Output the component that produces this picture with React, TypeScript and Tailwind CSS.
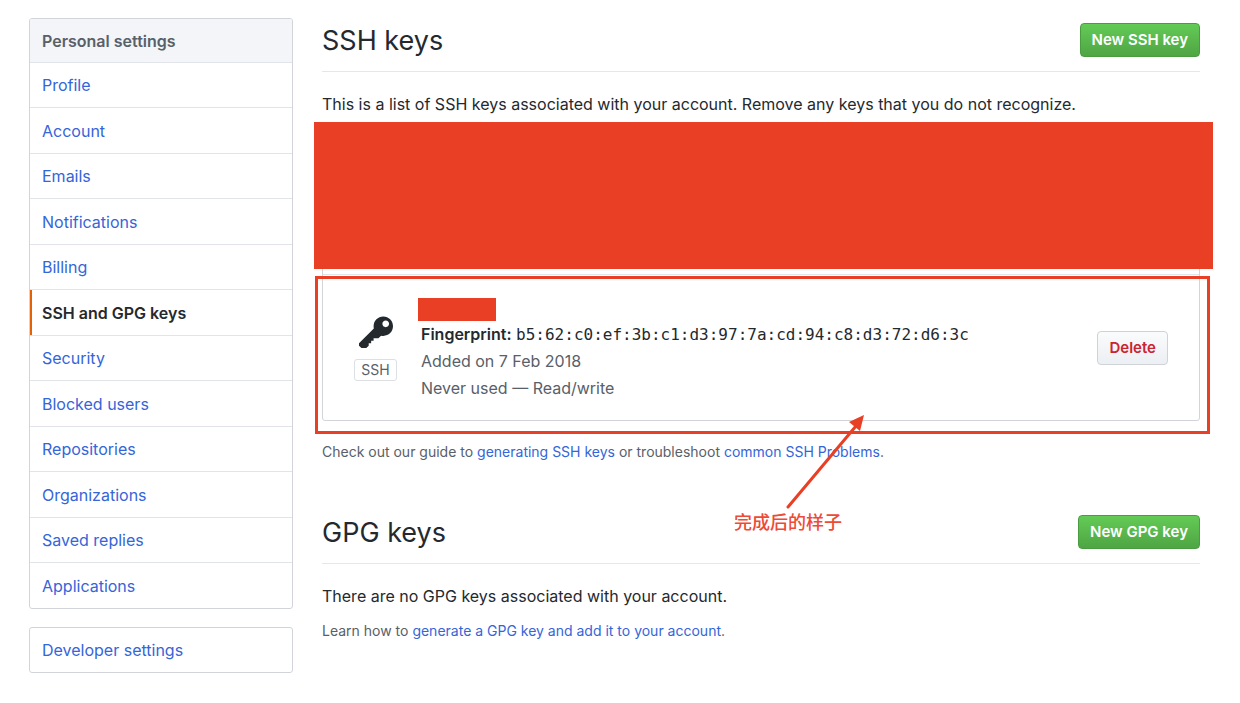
import React from "react";

const settings = [
  "Profile",
  "Account",
  "Emails",
  "Notifications",
  "Billing",
  "SSH and GPG keys",
  "Security",
  "Blocked users",
  "Repositories",
  "Organizations",
  "Saved replies",
  "Applications",
];

function Sidebar() {
  return (
    <aside className="w-[264px] shrink-0">
      <nav aria-label="Personal settings" className="overflow-hidden rounded-[3px] border border-[#d1d5da]">
        <h2 className="flex h-[43px] items-center bg-[#f3f5f8] px-3 font-semibold text-[#586069]">
          Personal settings
        </h2>
        <ul>
          {settings.map((name) => {
            const active = name === "SSH and GPG keys";
            return (
              <li key={name} className="h-[45px] border-t border-[#e1e4e8] even:h-[46px]">
                <a
                  href="#"
                  aria-current={active ? "page" : undefined}
                  className={
                    active
                      ? "flex h-full items-center border-l-2 border-[#e36209] pl-[10px] font-semibold text-[#24292e]"
                      : "flex h-full items-center px-3 text-[#3465d9]"
                  }
                >
                  {name}
                </a>
              </li>
            );
          })}
        </ul>
      </nav>
      <nav aria-label="Developer" className="mt-[18px] rounded-[3px] border border-[#d1d5da]">
        <a href="#" className="flex h-11 items-center px-3 text-[#3465d9]">
          Developer settings
        </a>
      </nav>
    </aside>
  );
}

function SectionHead({ title, action }: { title: string; action: string }) {
  return (
    <div className="flex h-[54px] items-start justify-between border-b border-[#e5e7ea]">
      <h1 className="text-[27px] leading-[45px] text-[#24292e]">{title}</h1>
      <button
        type="button"
        className="mt-[5px] h-[34px] rounded-[4px] border border-[#4a9c40] bg-linear-to-b from-[#63cb56] to-[#4fa543] px-[11px] text-[15px] font-semibold text-white"
      >
        {action}
      </button>
    </div>
  );
}

function KeyIcon() {
  return (
    <svg viewBox="0 0 14 16" className="h-[39px] w-[34px] fill-[#24292e]" aria-hidden="true">
      <path
        fillRule="evenodd"
        d="M12.83 2.17C12.08 1.42 11.14 1.03 10 1c-1.13.03-2.08.42-2.83 1.17S6.04 3.86 6.01 5c0 .3.03.59.09.89L0 12v1l1 1h2l1-1v-1h1v-1h1v-1h2l1.09-1.11c.3.08.59.11.91.11 1.14-.03 2.08-.42 2.83-1.17S13.97 6.14 14 5c-.03-1.14-.42-2.08-1.17-2.83zM11 5.38c-.77 0-1.38-.61-1.38-1.38 0-.77.61-1.38 1.38-1.38.77 0 1.38.61 1.38 1.38 0 .77-.61 1.38-1.38 1.38z"
      />
    </svg>
  );
}

function KeyList() {
  return (
    <div className="relative mt-4 rounded-[3px] border border-[#d1d5da]">
      <div className="h-[141px]" />
      <div className="flex h-[146px] items-center border-t border-[#e1e4e8] pl-[31px] pr-[31px]">
        <div className="flex w-[43px] flex-col items-center">
          <KeyIcon />
          <span className="mt-[6px] rounded-[3px] border border-[#dcdfe3] px-[6px] text-[14px] leading-5 text-[#586069]">
            SSH
          </span>
        </div>
        <div className="ml-6 flex-1 pt-1 text-[#586069]">
          <div className="-ml-[3px] h-[23px] w-[78px] bg-[#e83f25]" />
          <p className="leading-[27px] text-[#24292e]">
            <strong className="font-semibold">Fingerprint:</strong>{" "}
            <code className="font-['DejaVu_Sans_Mono',monospace] text-[16px]">
              b5:62:c0:ef:3b:c1:d3:97:7a:cd:94:c8:d3:72:d6:3c
            </code>
          </p>
          <p className="leading-[27px]">Added on 7 Feb 2018</p>
          <p className="leading-[27px]">Never used — Read/write</p>
        </div>
        <button
          type="button"
          className="h-[34px] rounded-[4px] border border-[#cfd3d7] bg-linear-to-b from-[#fafbfc] to-[#eceff3] px-[11px] text-[15px] font-semibold text-[#cb2431]"
        >
          Delete
        </button>
      </div>
      <div className="absolute -left-[9px] -right-[14px] -top-[11px] h-[147px] bg-[#e83f25]" />
      <div className="pointer-events-none absolute -bottom-[14px] -left-2 -right-[11px] h-[158px] border-[3px] border-[#e83f25]" />
      <svg
        viewBox="0 0 80 98"
        className="absolute -bottom-[90px] left-[463px] h-[98px] w-[80px]"
        aria-hidden="true"
      >
        <path d="M2 95L70 14" stroke="#e83f25" strokeWidth="3" strokeLinecap="round" />
        <path d="M78 3L63 10L74 19Z" fill="#e83f25" />
      </svg>
      <span className="absolute -bottom-[113px] left-[411px] font-['Noto_Sans_CJK_SC',sans-serif] text-[18px] font-medium leading-6 text-[#ee4a35]">
        完成后的样子
      </span>
    </div>
  );
}

export default function App() {
  return (
    <div className="flex items-start gap-[29px] bg-white pb-[30px] pl-[29px] pr-10 pt-[18px] font-[Inter,sans-serif] text-[16px] leading-6 text-[#24292e]">
      <Sidebar />
      <main className="min-w-0 flex-1">
        <section>
          <SectionHead title="SSH keys" action="New SSH key" />
          <p className="mt-5">
            This is a list of SSH keys associated with your account. Remove any keys that you do not recognize.
          </p>
          <KeyList />
          <p className="mt-[19px] text-[14px] text-[#586069]">
            Check out our guide to{" "}
            <a href="#" className="text-[#3465d9]">
              generating SSH keys
            </a>{" "}
            or troubleshoot{" "}
            <a href="#" className="text-[#3465d9]">
              common SSH Problems
            </a>
            .
          </p>
        </section>
        <section className="mt-[46px]">
          <SectionHead title="GPG keys" action="New GPG key" />
          <p className="mt-5">There are no GPG keys associated with your account.</p>
          <p className="mt-[11px] text-[14px] text-[#586069]">
            Learn how to{" "}
            <a href="#" className="text-[#3465d9]">
              generate a GPG key and add it to your account
            </a>
            .
          </p>
        </section>
      </main>
    </div>
  );
}
